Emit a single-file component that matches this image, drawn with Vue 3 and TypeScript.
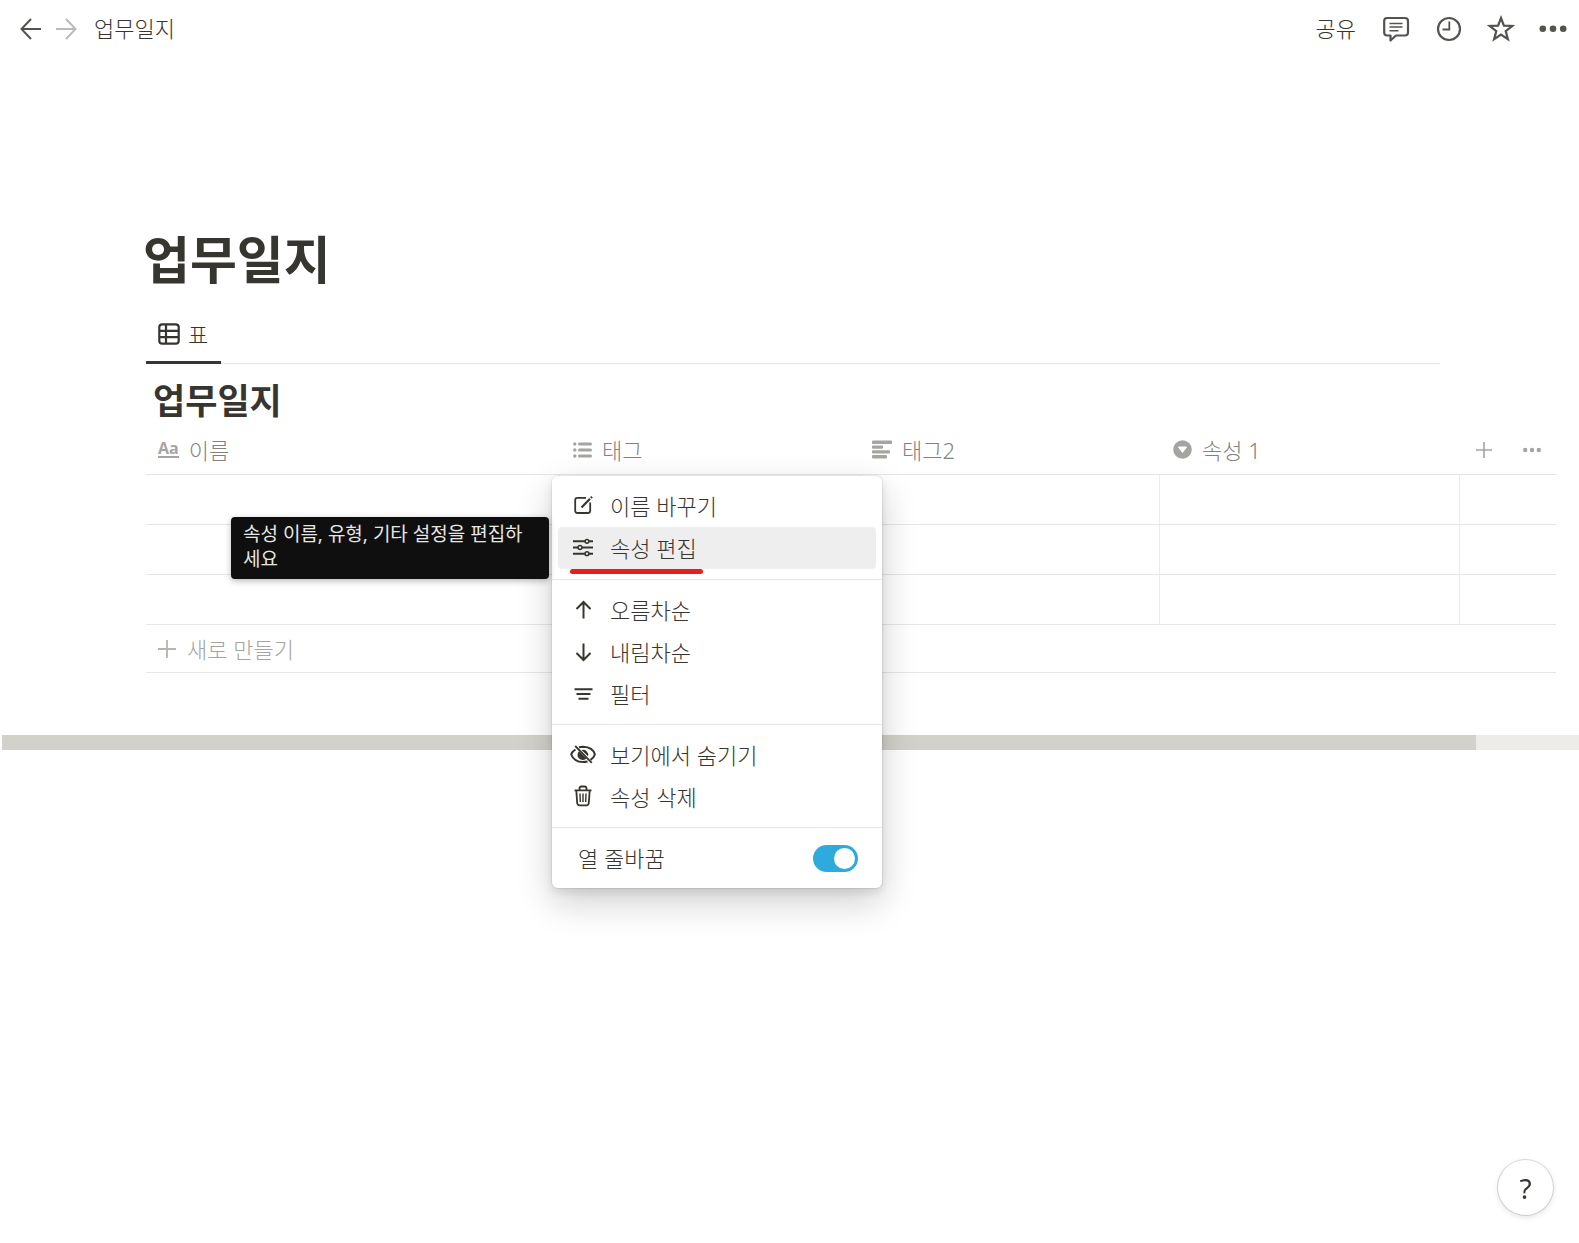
<script setup lang="ts">
import { ref } from 'vue'

interface MenuItem {
  icon: string
  label: string
  tip?: string
}

const title = '업무일지'
const wrapColumn = ref(true)
const scrollShare = ref(93.5)

const menuSections: MenuItem[][] = [
  [
    { icon: 'rename', label: '이름 바꾸기' },
    { icon: 'sliders', label: '속성 편집', tip: '속성 이름, 유형, 기타 설정을 편집하세요' },
  ],
  [
    { icon: 'up', label: '오름차순' },
    { icon: 'down', label: '내림차순' },
    { icon: 'filter', label: '필터' },
  ],
  [
    { icon: 'hide', label: '보기에서 숨기기' },
    { icon: 'trash', label: '속성 삭제' },
  ],
]
</script>

<template>
  <div class="app">
    <header class="topbar">
      <nav class="nav">
        <button class="icon-btn" type="button" aria-label="뒤로">
          <svg width="22" height="22" viewBox="0 0 22 22" fill="none" stroke="#55534e" stroke-width="2">
            <path d="M21 11H1.500M11 1L1.500 11L11 21" />
          </svg>
        </button>
        <button class="icon-btn" type="button" aria-label="앞으로">
          <svg width="22" height="22" viewBox="0 0 22 22" fill="none" stroke="#bbbab8" stroke-width="2">
            <path d="M1 11H20.500M11 1L20.500 11L11 21" />
          </svg>
        </button>
        <a class="crumb" href="#">{{ title }}</a>
      </nav>
      <div class="actions">
        <button class="share" type="button">공유</button>
        <button class="icon-btn" type="button" aria-label="댓글">
          <svg width="28" height="28" viewBox="1 0 28 28" fill="none" stroke="#55534e" stroke-width="2.200" stroke-linejoin="round">
            <path d="M5 3H23Q26 3 26 6V17.500Q26 20.500 23 20.500H14L8.500 25.500V20.500H5Q2.200 20.500 2.200 17.500V6Q2.200 3 5 3Z" />
            <path d="M7.500 8.500H20.500M7.500 12H20.500M7.500 15.700H16.500" stroke-width="1.600" />
          </svg>
        </button>
        <button class="icon-btn" type="button" aria-label="업데이트">
          <svg width="28" height="28" viewBox="0 0 28 28" fill="none" stroke="#55534e">
            <circle cx="14" cy="14" r="11" stroke-width="2.200" />
            <path d="M14.300 6.500V14.500H7.500" stroke-width="1.800" />
          </svg>
        </button>
        <button class="icon-btn" type="button" aria-label="즐겨찾기">
          <svg width="28" height="28" viewBox="0 0 28 28" fill="none" stroke="#55534e" stroke-width="2.200">
            <path d="M14 3L16.900 10.600L25.200 11L18.700 16.100L20.900 24.100L14 19.500L7.100 24.100L9.300 16.100L2.800 11L11.100 10.600Z" />
          </svg>
        </button>
        <button class="icon-btn" type="button" aria-label="더 보기">
          <svg width="28" height="28" viewBox="0 0 28 28" fill="#55534e">
            <circle cx="3.800" cy="13.700" r="3.300" /><circle cx="14" cy="13.700" r="3.300" /><circle cx="24.200" cy="13.700" r="3.300" />
          </svg>
        </button>
      </div>
    </header>

    <main class="page">
      <h1>{{ title }}</h1>

      <div class="tabs">
        <button class="tab" type="button">
          <svg width="22" height="22" viewBox="0 0 22 22" fill="none" stroke="#37352f" stroke-width="2.200">
            <rect x="1.300" y="1.300" width="19.400" height="19.400" rx="3" />
            <path d="M1 7.800H21M1 14.200H21M8 1V21" />
          </svg>
          <span>표</span>
        </button>
      </div>

      <h2>{{ title }}</h2>

      <table>
        <colgroup>
          <col class="col-name" /><col class="col-prop" /><col class="col-prop" /><col class="col-prop" /><col />
        </colgroup>
        <thead>
          <tr>
            <th scope="col">
              <div class="head">
                <span class="aa" aria-hidden="true">Aa</span>
                <span>이름</span>
              </div>
            </th>
            <th scope="col" class="anchor">
              <div class="head">
                <svg width="20" height="20" viewBox="-1 0 20 20" fill="#a5a4a0">
                  <circle cx="1.800" cy="4" r="1.700" /><circle cx="1.800" cy="10" r="1.700" /><circle cx="1.800" cy="16" r="1.700" />
                  <rect x="5" y="2.500" width="14" height="3" rx="1.500" /><rect x="5" y="8.500" width="14" height="3" rx="1.500" /><rect x="5" y="14.500" width="14" height="3" rx="1.500" />
                </svg>
                <span>태그</span>
              </div>

              <div class="menu">
                <ul v-for="(section, s) in menuSections" :key="s" class="section">
                  <li v-for="item in section" :key="item.icon" class="row">
                    <button class="item" :class="{ active: item.tip }" type="button">
                      <svg width="26" height="26" viewBox="0 0 26 26" fill="none" stroke="#37352f" stroke-width="1.800">
                        <template v-if="item.icon === 'rename'">
                          <path d="M16 4.800H7.500Q5.200 4.800 5.200 7V17.500Q5.200 20 7.500 20H18Q20.200 20 20.200 17.500V9.500" />
                          <path d="M11.500 14.500L20 5.800" stroke-width="2.200" />
                          <path d="M20.900 4.900L22 3.700" stroke-width="2.200" />
                        </template>
                        <template v-else-if="item.icon === 'sliders'">
                          <path d="M3 6.300H15M19 6.300H23M3 12.500H8M12 12.500H23M3 18.700H15M19 18.700H23" stroke-width="2" />
                          <circle cx="17" cy="6.300" r="1.900" stroke-width="1.500" /><circle cx="10" cy="12.500" r="1.900" stroke-width="1.500" /><circle cx="17" cy="18.700" r="1.900" stroke-width="1.500" />
                        </template>
                        <path v-else-if="item.icon === 'up'" stroke-width="2" d="M13.500 21.500V5.500M6.500 12L13.500 5L20.500 12" />
                        <path v-else-if="item.icon === 'down'" stroke-width="2" d="M13.500 4.500V20.500M6.500 14L13.500 21L20.500 14" />
                        <path v-else-if="item.icon === 'filter'" stroke-width="2" d="M4.500 8.200H22.500M6.500 13H20.500M8.500 17.700H18.500" />
                        <template v-else-if="item.icon === 'hide'">
                          <path d="M5.500 7.500Q1.500 10 1.200 12.500Q4 20 13 20Q15.500 20 17.500 19.500M9 5.300Q11 4.700 13 4.700Q23 5.100 24.900 12.500Q24 15.500 20.500 17.800" stroke-width="2" />
                          <path d="M9 9.300A5 5 0 0 0 16.300 16.500ZM11.500 8.100A5 5 0 0 1 18 14.200Z" fill="#37352f" stroke="none" />
                          <path d="M5.200 4L21.800 20.800" />
                        </template>
                        <template v-else>
                          <path d="M4.500 6.300H21.500M9.500 6V4.500Q9.500 2.500 11.500 2.500H14.500Q16.500 2.500 16.500 4.500V6M6.300 6.500L7.200 19Q7.400 21.300 9.500 21.300H16.500Q18.600 21.300 18.800 19L19.700 6.500" />
                          <path d="M10 9.500L10.300 18M13 9.500V18M16 9.500L15.700 18" stroke-width="1.400" />
                        </template>
                      </svg>
                      <span>{{ item.label }}</span>
                    </button>
                    <template v-if="item.tip">
                      <span class="mark"></span>
                      <div class="tip" role="tooltip">{{ item.tip }}</div>
                    </template>
                  </li>
                </ul>
                <div class="section">
                  <label class="wrap">
                    <span>열 줄바꿈</span>
                    <input v-model="wrapColumn" class="switch" type="checkbox" />
                  </label>
                </div>
              </div>
            </th>
            <th scope="col">
              <div class="head">
                <svg width="20" height="20" viewBox="0 0 20 20" fill="#a5a4a0">
                  <rect x="0" y="0.500" width="20" height="3.500" rx="1" /><rect x="0" y="5.500" width="11" height="3.300" rx="1" /><rect x="0" y="10.200" width="18" height="3.300" rx="1" /><rect x="0" y="15" width="15" height="3.500" rx="1" />
                </svg>
                <span>태그2</span>
              </div>
            </th>
            <th scope="col">
              <div class="head">
                <svg width="20" height="20" viewBox="-1 0 20 20">
                  <circle cx="9.500" cy="9.500" r="9.300" fill="#a5a4a0" />
                  <path d="M5.500 7H13.500L9.500 12.500Z" fill="#fff" stroke="#fff" stroke-linejoin="round" />
                </svg>
                <span>속성 1</span>
              </div>
            </th>
            <th scope="col">
              <div class="head tools">
                <button class="icon-btn" type="button" aria-label="속성 추가">
                  <svg width="16" height="16" viewBox="0 0 16 16" stroke="#a5a4a0" stroke-width="1.600"><path d="M8 0V16M0 8H16" /></svg>
                </button>
                <button class="icon-btn" type="button" aria-label="속성 더 보기">
                  <svg width="18" height="16" viewBox="0 0 18 16" fill="#a5a4a0"><circle cx="2.200" cy="8" r="2.200" /><circle cx="9" cy="8" r="2.200" /><circle cx="15.800" cy="8" r="2.200" /></svg>
                </button>
              </div>
            </th>
          </tr>
        </thead>
        <tbody>
          <tr v-for="n in 3" :key="n" class="data">
            <td v-for="c in 5" :key="c"></td>
          </tr>
          <tr class="new">
            <td colspan="5">
              <button class="add" type="button">
                <svg width="18" height="18" viewBox="0 0 18 18" stroke="#b5b4b1" stroke-width="1.800"><path d="M9 0V18M0 9H18" /></svg>
                <span>새로 만들기</span>
              </button>
            </td>
          </tr>
        </tbody>
      </table>
    </main>

    <div class="scroll"><div class="thumb" :style="{ width: scrollShare + '%' }"></div></div>

    <button class="help" type="button" aria-label="도움말">?</button>
  </div>
</template>

<style>
body {
  background: #fff;
}
</style>

<style scoped>
.app {
  min-height: 100vh;
  font-family: "Noto Sans", "Noto Sans CJK KR", sans-serif;
  font-size: 22px;
  font-weight: 300;
  line-height: 30px;
  color: #37352f;
}

button {
  margin: 0;
  padding: 0;
  border: 0;
  background: none;
  color: inherit;
  font: inherit;
  cursor: pointer;
}

svg {
  display: block;
  flex: none;
}

.topbar,
.nav,
.actions {
  display: flex;
  align-items: center;
}

.topbar {
  justify-content: space-between;
  height: 58px;
  padding: 0 12px 0 20px;
}

.nav {
  gap: 13px;
}

.crumb {
  margin-left: 4px;
  color: inherit;
  text-decoration: none;
}

.crumb,
.share {
  padding-bottom: 2px;
}

.actions {
  gap: 24px;
}

.share {
  margin-right: 3px;
}

.page {
  padding: 170px 23px 0 146px;
}

h1,
h2 {
  margin: 0;
  font-weight: 700;
}

h1 {
  margin-left: -3px;
  font-size: 51px;
  line-height: 62px;
}

h2 {
  margin: 14px 0 1px 7px;
  font-size: 35px;
  line-height: 46px;
}

.tabs {
  display: flex;
  margin: 16px 116px 0 0;
  border-bottom: 1px solid #e6e6e5;
}

.tab {
  display: flex;
  align-items: center;
  gap: 8px;
  height: 58px;
  margin-bottom: -1px;
  padding: 0 13px 0 12px;
  border-bottom: 3px solid #37352f;
}

table {
  width: 100%;
  table-layout: fixed;
  border-collapse: separate;
  border-spacing: 0;
}

.col-name {
  width: 414px;
}

.col-prop {
  width: 300px;
}

th,
td {
  padding: 0;
  border-bottom: 1px solid #e6e6e5;
  font-weight: inherit;
  text-align: left;
}

.anchor {
  position: relative;
}

.head {
  display: flex;
  align-items: center;
  gap: 10px;
  height: 49px;
  padding-left: 12px;
  color: #82817d;
}

.aa {
  border-bottom: 2px solid #a5a4a0;
  color: #a5a4a0;
  font-family: "Open Sans", sans-serif;
  font-size: 16px;
  font-weight: 700;
  line-height: 15px;
}

.tools {
  gap: 31px;
  padding-left: 16px;
}

.data td {
  height: 49px;
  border-right: 1px solid #ebebea;
}

.data td:last-child {
  border-right: 0;
}

.add {
  display: flex;
  align-items: center;
  gap: 11px;
  width: 100%;
  height: 47px;
  padding-left: 12px;
  color: #a5a4a0;
}

.menu {
  position: absolute;
  z-index: 2;
  top: 51px;
  left: -8px;
  width: 330px;
  border-radius: 6px;
  background: #fff;
  box-shadow: 0 0 0 1px rgba(15, 15, 15, 0.06), 0 4px 8px rgba(15, 15, 15, 0.1), 0 14px 36px rgba(15, 15, 15, 0.2);
}

.section {
  margin: 0;
  padding: 9px 6px;
  list-style: none;
}

.section:first-child {
  padding-bottom: 10px;
}

.section + .section {
  border-top: 1px solid #e6e6e5;
}

.row {
  position: relative;
}

.item {
  display: flex;
  align-items: center;
  gap: 14px;
  width: 100%;
  height: 42px;
  padding: 0 12px;
  border-radius: 4px;
}

.active {
  background: #eee;
}

.mark {
  position: absolute;
  top: 100%;
  left: 12px;
  width: 133px;
  height: 5px;
  border-radius: 3px;
  background: #e61e1e;
}

.tip {
  position: absolute;
  top: -10px;
  right: calc(100% + 9px);
  box-sizing: border-box;
  width: 318px;
  padding: 5px 12px 7px;
  border-radius: 4px;
  background: #0f0f0f;
  box-shadow: 0 2px 6px rgba(15, 15, 15, 0.3);
  color: #e6e6e5;
  font-size: 19px;
  font-weight: 400;
  line-height: 25px;
}

.wrap {
  display: flex;
  align-items: center;
  justify-content: space-between;
  height: 42px;
  padding: 0 18px 0 20px;
}

.switch {
  display: flex;
  box-sizing: border-box;
  width: 45px;
  height: 27px;
  margin: 0;
  padding: 3px;
  border-radius: 14px;
  background: #d3d1cb;
  appearance: none;
}

.switch::before {
  width: 21px;
  height: 21px;
  border-radius: 50%;
  background: #fff;
  content: "";
}

.switch:checked {
  justify-content: flex-end;
  background: #2eaadc;
}

.scroll {
  margin: 62px 0 0 2px;
  background: #edece9;
}

.thumb {
  height: 15px;
  background: #d3d1cb;
}

.help {
  position: fixed;
  right: 26px;
  bottom: 28px;
  width: 55px;
  height: 55px;
  border-radius: 50%;
  background: #fff;
  box-shadow: 0 0 0 1px rgba(15, 15, 15, 0.14), 0 2px 6px rgba(15, 15, 15, 0.12);
  font-size: 28px;
  font-weight: 400;
}
</style>
